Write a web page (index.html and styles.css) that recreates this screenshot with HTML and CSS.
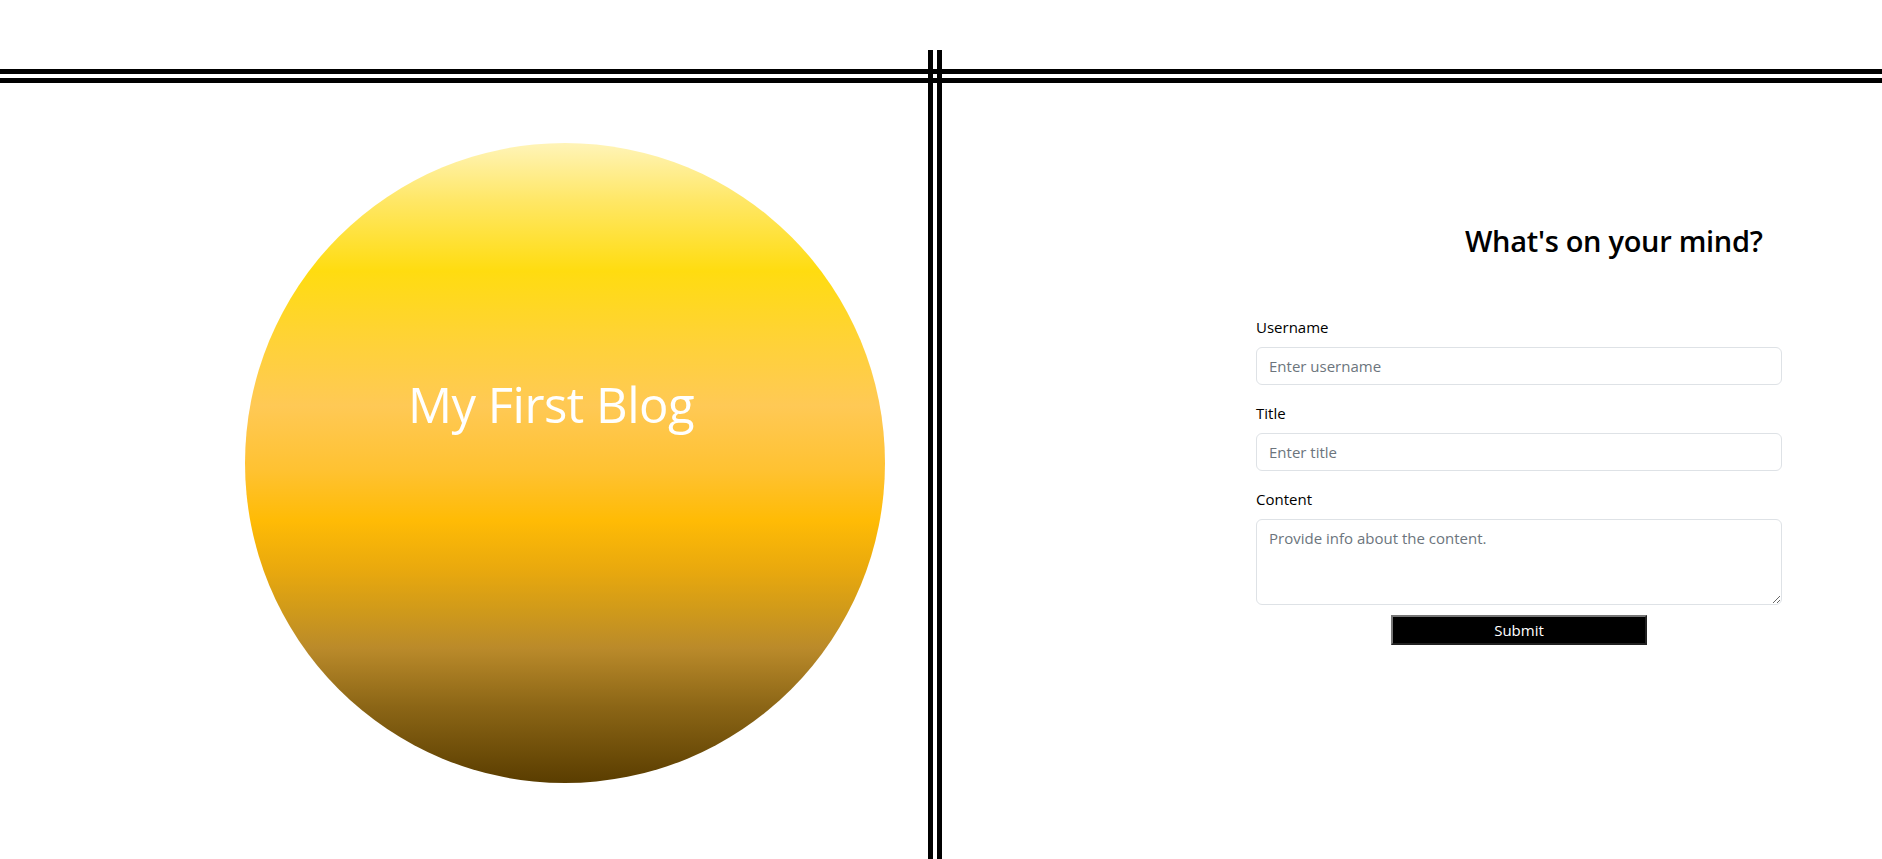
FILE: index.html
```html
<!DOCTYPE html>
<html lang="en">
<head>
<meta charset="utf-8">
<title>My First Blog</title>
<link rel="stylesheet" href="styles.css">
</head>
<body>
<div class="page">
  <div class="topbar"></div>
  <div class="divider"></div>
  <section class="left">
    <div class="circle">
      <h1 class="circle-title">My First Blog</h1>
    </div>
  </section>
  <section class="right">
    <h3 class="form-heading">What's on your mind?</h3>
    <form class="post-form">
      <div class="field">
        <label class="form-label" for="username">Username</label>
        <input class="form-control" id="username" type="text" placeholder="Enter username">
      </div>
      <div class="field">
        <label class="form-label" for="title">Title</label>
        <input class="form-control" id="title" type="text" placeholder="Enter title">
      </div>
      <div class="field field-last">
        <label class="form-label" for="content">Content</label>
        <textarea class="form-control textarea" id="content" rows="3" placeholder="Provide info about the content."></textarea>
      </div>
      <div class="actions">
        <button class="submit" type="button">Submit</button>
      </div>
    </form>
  </section>
</div>
</body>
</html>
```
FILE: styles.css
```css
* { box-sizing: border-box; }
html, body { margin: 0; padding: 0; }
body {
  font-family: "Open Sans", "Noto Sans", sans-serif;
  font-size: 16px;
  line-height: 1.5;
  color: #212529;
  background: #fff;
  overflow: hidden;
}
.page {
  display: grid;
  grid-template-columns: 928px 14px 1fr;
  grid-template-rows: 83px 1fr;
  height: 100vh;
}
.topbar {
  grid-column: 1 / -1;
  grid-row: 1;
  border-bottom: 14px double #000;
}
.divider {
  grid-column: 2;
  grid-row: 1 / -1;
  margin-top: 50px;
  border-left: 14px double #000;
}
.left {
  grid-column: 1;
  grid-row: 2;
  padding: 60px 0 0 245px;
}
.circle {
  width: 640px;
  height: 640px;
  border-radius: 50%;
  background: linear-gradient(to bottom,
    #fff4b8 0%,
    #ffe766 9%,
    #ffdc10 20%,
    #ffd334 30%,
    #ffc955 41%,
    #ffc232 51%,
    #ffbb05 59%,
    #e8a80e 67%,
    #d09a1a 73%,
    #ba8a2a 79%,
    #8c6616 88%,
    #5a3d00 100%);
  padding: 232px 28px 0 0;
  text-align: center;
}
.circle-title {
  margin: 0;
  font-size: 49px;
  font-weight: 400;
  line-height: 1.2;
  color: #fff;
  letter-spacing: -0.5px;
}
.right {
  grid-column: 3;
  grid-row: 2;
  padding: 0 0 0 314px;
}
.form-heading {
  margin: 141px 0 0 209px;
  font-size: 29px;
  font-weight: 600;
  line-height: 1.2;
  color: #000;
  letter-spacing: -0.3px;
}
.post-form {
  width: 526px;
  margin-top: 56px;
}
.field {
  margin-bottom: 16px;
}
.field-last {
  margin-bottom: 10px;
}
.form-label {
  display: block;
  margin-bottom: 8px;
  font-size: 15px;
  line-height: 24px;
  color: #000;
}
.form-control {
  display: block;
  width: 100%;
  height: 38px;
  padding: 6px 12px;
  font-family: inherit;
  font-size: 15px;
  line-height: 24px;
  color: #212529;
  background: #fff;
  border: 1px solid #dee2e6;
  border-radius: 6px;
  outline: none;
}
.form-control::placeholder {
  color: #6c757d;
}
.textarea {
  height: 86px;
  resize: vertical;
}
.actions {
  display: flex;
  justify-content: center;
}
.submit {
  width: 256px;
  height: 30px;
  padding: 1px 6px;
  font-family: inherit;
  font-size: 15px;
  line-height: 24px;
  color: #fff;
  background: #000;
  border: 2px outset #767676;
}
```
